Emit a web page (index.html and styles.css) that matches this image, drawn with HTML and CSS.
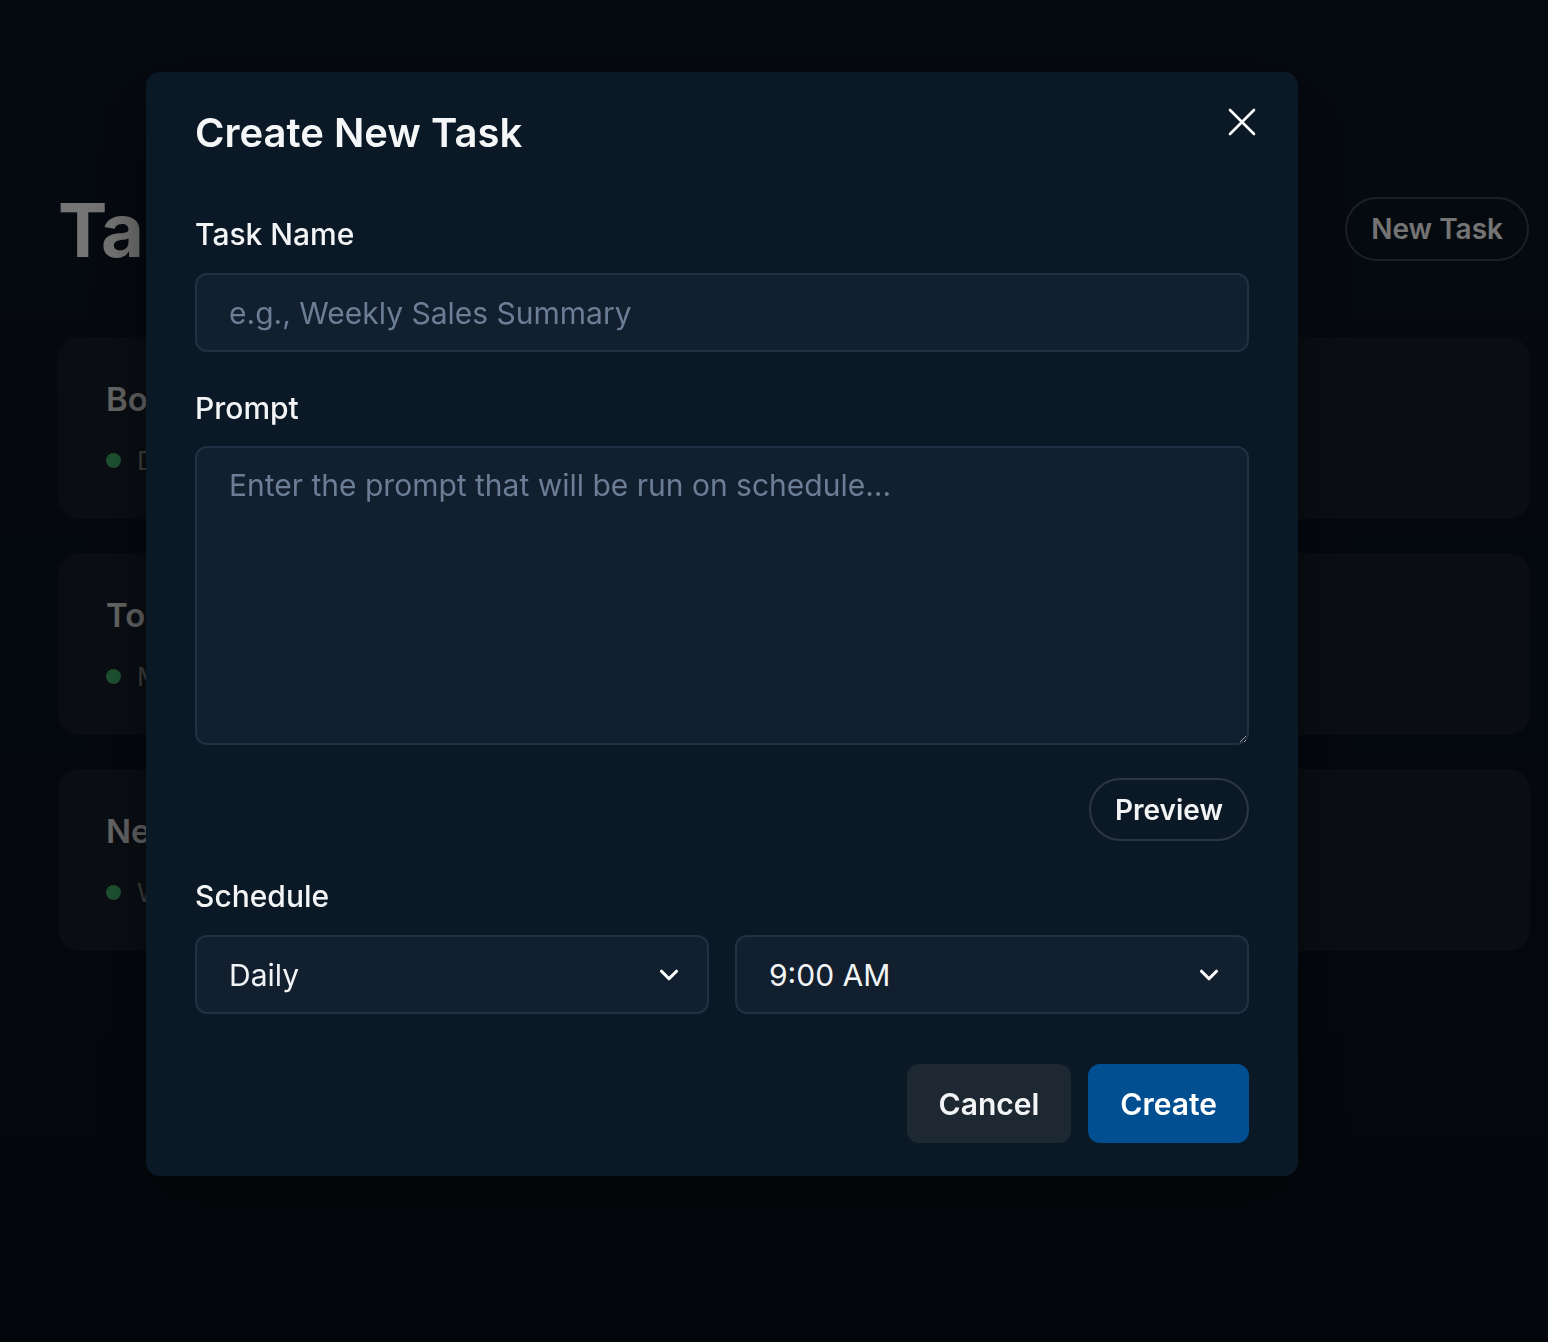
FILE: index.html
```
<!DOCTYPE html>
<html lang="en">
<head>
<meta charset="utf-8">
<title>Tasks</title>
<link rel="stylesheet" href="styles.css">
</head>
<body>
<div class="page">
  <header class="page-header">
    <h1 class="page-title">Tasks</h1>
    <button class="btn-outline-page">New Task</button>
  </header>
  <div class="task-list">
    <div class="task-card">
      <div class="task-title">Board Report Digest</div>
      <div class="task-meta"><span class="dot"></span>Daily at 9:00 AM</div>
    </div>
    <div class="task-card">
      <div class="task-title">Top Customer Feedback</div>
      <div class="task-meta"><span class="dot"></span>Mondays at 8:00 AM</div>
    </div>
    <div class="task-card">
      <div class="task-title">News Roundup</div>
      <div class="task-meta"><span class="dot"></span>Weekly on Friday</div>
    </div>
  </div>
</div>

<div class="overlay">
  <div class="modal" role="dialog" aria-labelledby="modal-title">
    <div class="modal-header">
      <h2 class="modal-title" id="modal-title">Create New Task</h2>
      <button class="close-btn" aria-label="Close">
        <svg width="28" height="28" viewBox="0 0 28 28" fill="none" stroke="#ffffff" stroke-width="2.6" stroke-linecap="round"><path d="M2 2L26 26M26 2L2 26"/></svg>
      </button>
    </div>

    <label class="field-label" for="task-name">Task Name</label>
    <input class="text-input" id="task-name" type="text" placeholder="e.g., Weekly Sales Summary">

    <label class="field-label field-gap" for="prompt">Prompt</label>
    <textarea class="text-area" id="prompt" placeholder="Enter the prompt that will be run on schedule..."></textarea>

    <div class="preview-row">
      <button class="btn-pill">Preview</button>
    </div>

    <div class="field-label schedule-label">Schedule</div>
    <div class="schedule-row">
      <div class="select-box">
        <span>Daily</span>
        <svg width="30" height="30" viewBox="0 0 24 24" fill="none" stroke="#ffffff" stroke-width="2.5" stroke-linecap="round" stroke-linejoin="round"><path d="M6 9l6 6 6-6"/></svg>
      </div>
      <div class="select-box">
        <span>9:00 AM</span>
        <svg width="30" height="30" viewBox="0 0 24 24" fill="none" stroke="#ffffff" stroke-width="2.5" stroke-linecap="round" stroke-linejoin="round"><path d="M6 9l6 6 6-6"/></svg>
      </div>
    </div>

    <div class="modal-actions">
      <button class="btn btn-cancel">Cancel</button>
      <button class="btn btn-create">Create</button>
    </div>
  </div>
</div>
</body>
</html>
```

FILE: styles.css
```
* { box-sizing: border-box; }

html, body {
  margin: 0;
  height: 100%;
}

body {
  font-family: Inter, "Noto Sans", "Liberation Sans", sans-serif;
  background: linear-gradient(180deg, #0c1623 0%, #08101a 100%);
  color: #f3f4f6;
  overflow: hidden;
}

.page {
  width: 1472px;
  margin-left: 58px;
  padding-top: 190px;
}

.page-header {
  display: flex;
  justify-content: space-between;
  align-items: center;
  height: 80px;
}

.page-title {
  margin: 0;
  font-size: 74px;
  font-weight: 700;
  color: #f5f5f5;
  letter-spacing: -1px;
  line-height: 80px;
}

.btn-outline-page {
  height: 64px;
  padding: 0 24px;
  border: 2px solid #3a4250;
  border-radius: 32px;
  background: transparent;
  color: #f2f2f2;
  font-family: inherit;
  font-size: 28px;
  font-weight: 600;
  margin-right: 1px;
  margin-top: -2px;
}

.task-list {
  display: flex;
  flex-direction: column;
  gap: 34px;
  margin-top: 67px;
}

.task-card {
  height: 182px;
  border-radius: 22px;
  background: #161e28;
  padding: 42px 48px;
}

.task-title {
  font-size: 33px;
  font-weight: 600;
  color: #d8d8d8;
  line-height: 40px;
}

.task-meta {
  margin-top: 26px;
  display: flex;
  align-items: center;
  gap: 16px;
  font-size: 26px;
  color: #8a8a8a;
}

.dot {
  width: 15px;
  height: 15px;
  border-radius: 50%;
  background: #3fae6a;
}

.overlay {
  position: fixed;
  inset: 0;
  background: rgba(0, 0, 0, 0.52);
}

.modal {
  position: absolute;
  left: 146px;
  top: 72px;
  width: 1152px;
  background: #0b1825;
  border-radius: 14px;
  padding: 39px 49px 33px;
  display: flex;
  flex-direction: column;
  box-shadow: 0 25px 60px rgba(0, 0, 0, 0.55);
}

.modal-header {
  display: flex;
  justify-content: space-between;
  align-items: flex-start;
  height: 44px;
  margin-bottom: 61px;
}

.modal-title {
  margin: 0;
  font-size: 40px;
  font-weight: 600;
  line-height: 44px;
  color: #f5f6f7;
}

.close-btn {
  width: 28px;
  height: 28px;
  padding: 0;
  border: 0;
  background: transparent;
  margin-top: -3px;
  margin-right: -7px;
}

.close-btn svg { display: block; }

.field-label {
  display: block;
  font-size: 30px;
  font-weight: 500;
  line-height: 36px;
  color: #f3f4f6;
  margin-bottom: 21px;
}

.field-gap { margin-top: 38px; margin-bottom: 20px; }

.text-input,
.text-area,
.select-box {
  width: 100%;
  background: #121f2e;
  border: 2px solid #223043;
  border-radius: 12px;
  color: #f3f4f6;
  font-family: inherit;
  font-size: 30px;
}

.text-input {
  height: 79px;
  padding: 0 32px;
  outline: none;
}

.text-area {
  height: 299px;
  padding: 17px 32px;
  line-height: 40px;
  outline: none;
  resize: vertical;
  display: block;
}

.text-input::placeholder,
.text-area::placeholder {
  color: #6b7e95;
  opacity: 1;
}

.preview-row {
  display: flex;
  justify-content: flex-end;
  margin-top: 33px;
}

.btn-pill {
  height: 63px;
  padding: 0 24px;
  border: 2px solid #2b3748;
  border-radius: 32px;
  background: transparent;
  color: #f3f4f6;
  font-family: inherit;
  font-size: 28px;
  font-weight: 600;
}

.schedule-label { margin-top: 37px; margin-bottom: 21px; }

.schedule-row {
  display: grid;
  grid-template-columns: 1fr 1fr;
  gap: 26px;
}

.select-box {
  height: 79px;
  padding: 0 23px 0 32px;
  display: flex;
  align-items: center;
  justify-content: space-between;
}

.select-box svg { display: block; }

.modal-actions {
  display: flex;
  justify-content: flex-end;
  gap: 17px;
  margin-top: 50px;
}

.btn {
  height: 79px;
  padding: 0 32px;
  border: 0;
  border-radius: 12px;
  font-family: inherit;
  font-size: 30px;
  font-weight: 600;
  color: #f3f4f6;
}

.btn-cancel { background: #1e2833; }
.btn-create { background: #014f91; color: #ffffff; }
```
